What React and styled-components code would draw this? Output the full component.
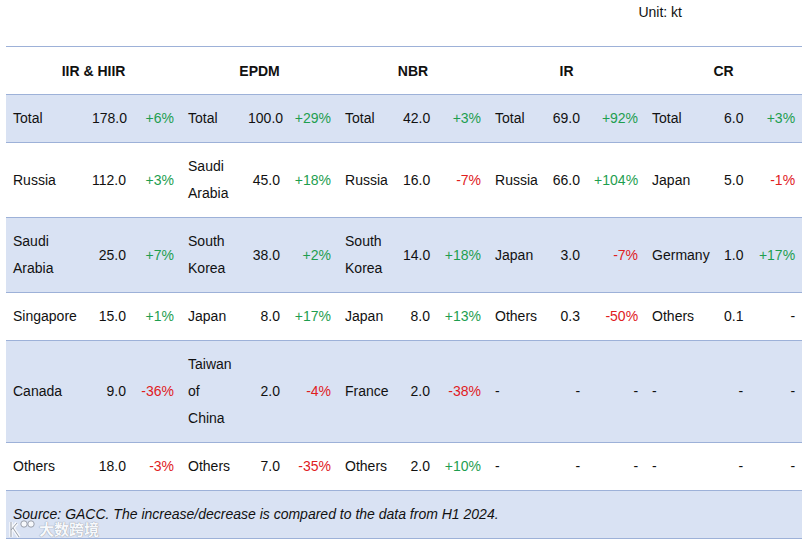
import React from "react";
import styled, { createGlobalStyle } from "styled-components";

const GlobalStyle = createGlobalStyle`
  html, body {
    margin: 0;
    padding: 0;
    background: #ffffff;
  }
  body {
    font-family: "Liberation Sans", Arial, sans-serif;
    font-size: 14px;
    color: #111111;
  }
`;

const Page = styled.div`
  position: relative;
  width: 811px;
  height: 547px;
  padding-left: 6px;
  box-sizing: border-box;
`;

const Unit = styled.div`
  width: 796px;
  box-sizing: border-box;
  padding: 4px 120px 0 0;
  height: 46px;
  line-height: 16px;
  text-align: right;
`;

const Table = styled.table`
  width: 796px;
  table-layout: fixed;
  border-collapse: collapse;
  border-top: 1px solid #9db1d8;
`;

const Row = styled.tr`
  background: ${(p) => (p.shaded ? "#d9e2f3" : "#ffffff")};
  border-bottom: 1px solid #9db1d8;
`;

const Head = styled.th`
  height: 47px;
  padding: 0;
  font-weight: bold;
  text-align: center;
  vertical-align: middle;
`;

const Cell = styled.td`
  padding: 10px 7px;
  line-height: 27px;
  vertical-align: middle;
  text-align: ${(p) => (p.num ? "right" : "left")};
  color: ${(p) =>
    p.trend === "up" ? "#1e9e4f" : p.trend === "down" ? "#e0201e" : "#111111"};
  white-space: ${(p) => (p.num ? "nowrap" : "normal")};
  overflow: visible;
`;

const Note = styled.td`
  padding: 10px 7px;
  line-height: 27px;
  font-style: italic;
  text-align: left;
`;

const Watermark = styled.div`
  position: absolute;
  left: 8px;
  top: 519px;
  display: flex;
  align-items: center;
  gap: 3px;
  opacity: 0.8;
`;

const WatermarkText = styled.span`
  font-family: "Noto Sans CJK SC", sans-serif;
  font-size: 15px;
  line-height: 20px;
  font-weight: bold;
  color: #ffffff;
  text-shadow: 0 0 1px #8a8f99, 0 0 1px #8a8f99;
`;

const widths = [79, 48, 48, 60, 46, 51, 58, 41, 51, 57, 42, 58, 72, 33, 52];

const groups = ["IIR & HIIR", "EPDM", "NBR", "IR", "CR"];

const rows = [
  [
    ["Total", "178.0", "+6%"],
    ["Total", "100.0", "+29%"],
    ["Total", "42.0", "+3%"],
    ["Total", "69.0", "+92%"],
    ["Total", "6.0", "+3%"],
  ],
  [
    ["Russia", "112.0", "+3%"],
    ["Saudi Arabia", "45.0", "+18%"],
    ["Russia", "16.0", "-7%"],
    ["Russia", "66.0", "+104%"],
    ["Japan", "5.0", "-1%"],
  ],
  [
    ["Saudi Arabia", "25.0", "+7%"],
    ["South Korea", "38.0", "+2%"],
    ["South Korea", "14.0", "+18%"],
    ["Japan", "3.0", "-7%"],
    ["Germany", "1.0", "+17%"],
  ],
  [
    ["Singapore", "15.0", "+1%"],
    ["Japan", "8.0", "+17%"],
    ["Japan", "8.0", "+13%"],
    ["Others", "0.3", "-50%"],
    ["Others", "0.1", "-"],
  ],
  [
    ["Canada", "9.0", "-36%"],
    ["Taiwan of China", "2.0", "-4%"],
    ["France", "2.0", "-38%"],
    ["-", "-", "-"],
    ["-", "-", "-"],
  ],
  [
    ["Others", "18.0", "-3%"],
    ["Others", "7.0", "-35%"],
    ["Others", "2.0", "+10%"],
    ["-", "-", "-"],
    ["-", "-", "-"],
  ],
];

const trendOf = (pct) =>
  pct.startsWith("+") ? "up" : pct.length > 1 && pct.startsWith("-") ? "down" : undefined;

const Logo = () => (
  <svg width="28" height="20" viewBox="0 0 28 20">
    <g fill="none" stroke="#8a8f99" strokeWidth="1">
      <path d="M3 3 L3 18 M3 11 L9 4 M5 9 L11 18" stroke="#ffffff" strokeWidth="3.5" />
      <path d="M3 3 L3 18 M3 11 L9 4 M5 9 L11 18" />
      <circle cx="16" cy="5" r="3.2" fill="#ffffff" />
      <circle cx="23" cy="5" r="3.2" fill="#ffffff" />
    </g>
  </svg>
);

export default function App() {
  return (
    <>
      <GlobalStyle />
      <Page>
        <Unit>Unit: kt</Unit>
        <Table>
          <colgroup>
            {widths.map((w, i) => (
              <col key={i} style={{ width: w }} />
            ))}
          </colgroup>
          <thead>
            <Row>
              {groups.map((g) => (
                <Head key={g} colSpan={3}>
                  {g}
                </Head>
              ))}
            </Row>
          </thead>
          <tbody>
            {rows.map((row, r) => (
              <Row key={r} shaded={r % 2 === 0}>
                {row.map(([label, value, pct], c) => (
                  <React.Fragment key={c}>
                    <Cell>{label}</Cell>
                    <Cell num>{value}</Cell>
                    <Cell num trend={trendOf(pct)}>
                      {pct}
                    </Cell>
                  </React.Fragment>
                ))}
              </Row>
            ))}
            <Row shaded>
              <Note colSpan={15}>
                Source: GACC. The increase/decrease is compared to the data from H1 2024.
              </Note>
            </Row>
          </tbody>
        </Table>
        <Watermark>
          <Logo />
          <WatermarkText>大数跨境</WatermarkText>
        </Watermark>
      </Page>
    </>
  );
}
